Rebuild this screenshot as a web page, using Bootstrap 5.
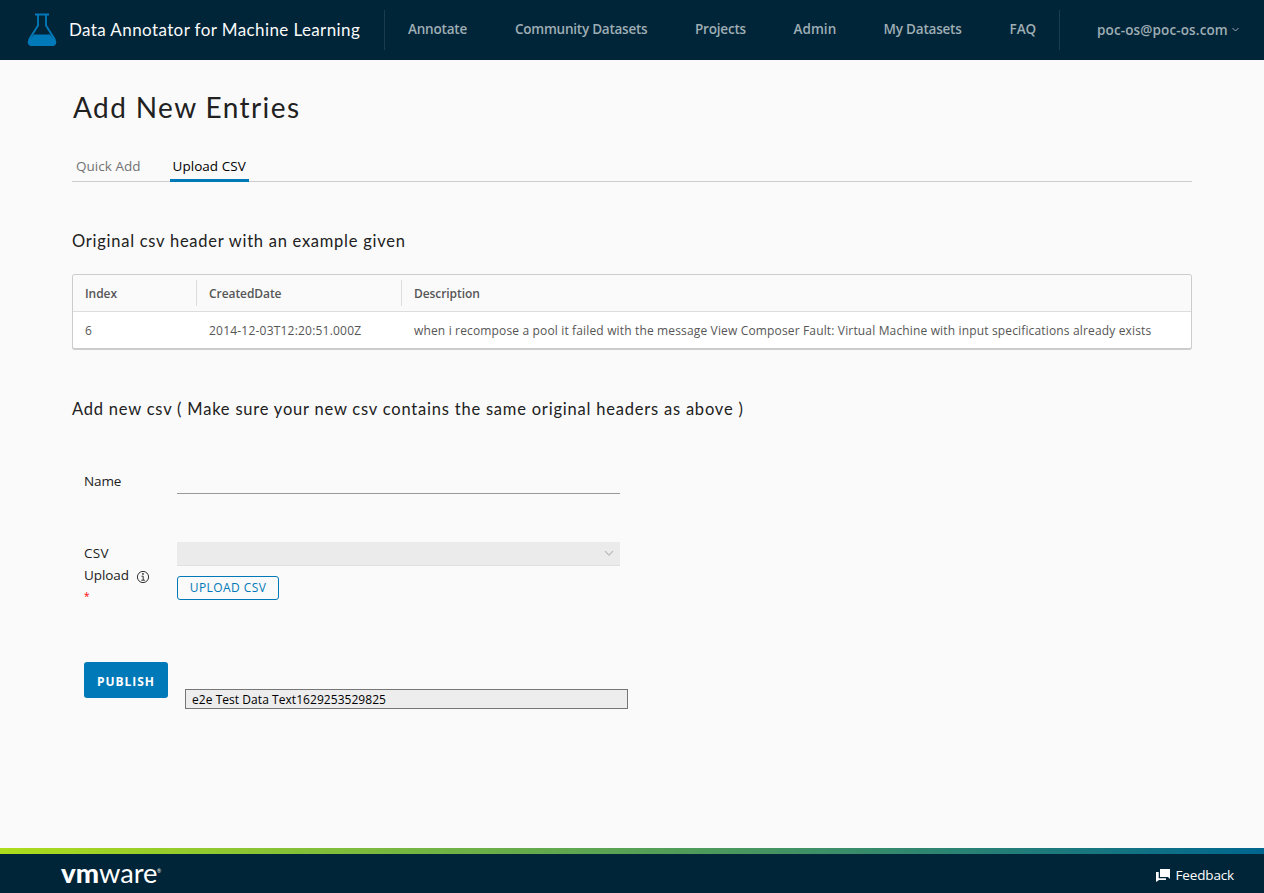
<!DOCTYPE html>
<html lang="en">
<head>
<meta charset="utf-8">
<meta name="viewport" content="width=device-width, initial-scale=1">
<title>Data Annotator for Machine Learning</title>
<link href="https://cdn.jsdelivr.net/npm/bootstrap@5.3.0/dist/css/bootstrap.min.css" rel="stylesheet">
<style>
:root{--navy:#002538;--blue:#0079b8;--ui:"Open Sans","Noto Sans",sans-serif;--head:Lato,"Open Sans",sans-serif}
body{font-family:var(--ui);font-size:13.5px;background:#fafafa;color:#212121;height:893px}
svg{display:block;flex:none;overflow:visible}
.topbar{height:60px;background:var(--navy)}
.brand{width:385px;padding-left:27px}
.brand-title{font:400 17px/24px var(--head);letter-spacing:.4px;color:#fafafa;margin:-1px 0 0 12px}
.flask{margin-top:-1px}
.rule-end{position:relative}
.rule-end::after{content:"";position:absolute;right:0;top:10px;height:40px;width:1px;background:#1a3c4d}
.main-links{width:675px}
.main-links a,.account{font-weight:600;color:#9fadb4;line-height:58px;letter-spacing:-.2px;white-space:nowrap}
.main-links a{padding:0 0 0 23px;width:107px}
.main-links a.w-comm{width:180px;letter-spacing:-.24px}.main-links a.w-proj{width:98.5px}.main-links a.w-adm{width:90px;letter-spacing:.05px}.main-links a.w-my{width:126px}.main-links a.w-faq{width:72px;letter-spacing:0}
.account{padding-left:37px;letter-spacing:.13px}
.page-body{padding:0 72px}
.page-title{font:400 28px/36px var(--head);letter-spacing:1.4px;margin:29px 0 0 1px}
.tab-line{height:36px;margin-top:21px;margin-bottom:47px;padding-left:1px;box-shadow:inset 0 -1px 0 #ccc}
.tab-line a{height:36px;width:71px;line-height:41px;color:#737373;padding:0 3px;letter-spacing:.04px;white-space:nowrap}
.tab-line a.active{color:#000;margin-left:26px;padding-left:2.500px;width:79px;box-shadow:inset 0 -3px 0 var(--blue)}
.section-title{font:400 16.5px/24px var(--head);letter-spacing:.74px;margin:0}
.section-title.second{margin-top:47px;letter-spacing:.79px}
.datagrid{margin-top:21px;height:76px;border:1px solid #ccc;border-bottom-width:2px;border-radius:3px;color:#565656;font-size:12px;background:#fff;overflow:hidden}
.grid-head{height:37px;background:#fafafa;border-bottom:1px solid #ddd;font-weight:600;line-height:37px;letter-spacing:-.07px}
.grid-line{line-height:37px;letter-spacing:.152px;white-space:nowrap}
.c-index{width:124px;padding-left:12px}.c-date{width:205px;padding-left:12px}.c-desc{padding-left:12px}
.grid-line .c-date{letter-spacing:.21px}
.grid-head .c-index,.grid-head .c-date{background:linear-gradient(#ddd,#ddd) right 5px/1px 26px no-repeat}
.entry-form{padding-left:12px}
.form-line{margin-top:48px}
.form-line.first{margin-top:49px}
.label-col{width:93px;letter-spacing:-.1px}
.label-col label{line-height:23px}
.req{color:#f00;font-size:10px;line-height:19px}
.field-col{width:443px}
.name-input{height:24px;border:0;border-bottom:1px solid #999;border-radius:0;background:transparent;padding:0 6px}
.file-select{height:24px;background:#ebebeb;border-bottom:1px solid #e0e0e0;padding-right:6px}
.btn-upload{height:24px;width:102px;margin-top:10px;border:1px solid var(--blue);border-radius:3px;color:var(--blue);font-size:12px;line-height:20px;padding:0;letter-spacing:.42px}
.btn-publish{height:36px;width:84px;border-radius:3px;background:var(--blue);color:#fff;font-size:12px;font-weight:700;padding:4px 0 0;letter-spacing:.95px;border:0}
.title-box{height:20px;width:443px;border:1px solid #767676;border-radius:0;background:#ededed;color:#000;font-size:12px;line-height:18px;padding:0 6px;letter-spacing:.05px;margin:27px 0 0 17px}
.foot{height:45px;background:var(--navy)}
.foot-stripe{height:6px;background:linear-gradient(90deg,#addc1c,#00668f)}
.foot-bar{height:39px;padding:2px 30px 0 60px}
.feedback{color:#fff;font-size:13.5px;letter-spacing:-.15px;line-height:20px}
</style>
</head>
<body class="d-flex flex-column overflow-hidden">
<header class="topbar d-flex">
  <div class="brand rule-end d-flex align-items-center">
    <svg class="flask" width="30" height="34" viewBox="0 0 30 34"><path d="M8 1.500h14M11 2v10.500L2.500 26q-2.500 6 2.500 6h20q5 0 2.500-6L19 12.500V2" fill="none" stroke="#0079b8" stroke-width="1.900"/><path d="M7 21.500h16L28.500 28q1.500 5-4 5h-19q-5.500 0-4-5Z" fill="#0079b8"/></svg>
    <span class="brand-title">Data Annotator for Machine Learning</span>
  </div>
  <nav class="main-links rule-end d-flex">
    <a class="text-decoration-none" href="#">Annotate</a>
    <a class="text-decoration-none w-comm" href="#">Community Datasets</a>
    <a class="text-decoration-none w-proj" href="#">Projects</a>
    <a class="text-decoration-none w-adm" href="#">Admin</a>
    <a class="text-decoration-none w-my" href="#">My Datasets</a>
    <a class="text-decoration-none w-faq" href="#">FAQ</a>
  </nav>
  <div class="account d-flex align-items-center">poc-os@poc-os.com
    <svg class="ms-1" width="7" height="6" viewBox="0 0 7 6"><path d="M.5 1 3.500 4 6.500 1" fill="none" stroke="#9fadb4"/></svg>
  </div>
</header>

<main class="page-body flex-grow-1">
  <h1 class="page-title">Add New Entries</h1>
  <nav class="tab-line d-flex">
    <a class="text-decoration-none" href="#">Quick Add</a>
    <a class="text-decoration-none active" href="#">Upload CSV</a>
  </nav>
  <h4 class="section-title">Original csv header with an example given</h4>
  <div class="datagrid">
    <div class="grid-head d-flex"><div class="c-index">Index</div><div class="c-date">CreatedDate</div><div class="c-desc">Description</div></div>
    <div class="grid-line d-flex"><div class="c-index">6</div><div class="c-date">2014-12-03T12:20:51.000Z</div><div class="c-desc">when i recompose a pool it failed with the message View Composer Fault: Virtual Machine with input specifications already exists</div></div>
  </div>
  <h4 class="section-title second">Add new csv ( Make sure your new csv contains the same original headers as above )</h4>

  <form class="entry-form">
    <div class="form-line first d-flex">
      <div class="label-col"><label for="nm">Name</label></div>
      <div class="field-col"><input id="nm" class="name-input w-100 d-block" type="text"></div>
    </div>
    <div class="form-line d-flex">
      <div class="label-col">
        <div style="height:22px;line-height:23px;letter-spacing:.3px">CSV</div>
        <div class="d-flex align-items-center" style="height:23px">Upload
          <svg style="margin:2px 0 0 7px" width="14" height="14" viewBox="0 0 14 14" fill="none" stroke="#333"><circle cx="7" cy="7" r="5.600"/><path d="M5.500 6.200h1.700v3.900M5.300 10.200h3.600"/><circle cx="7" cy="3.900" r=".5" fill="#333"/></svg>
        </div>
        <div class="req">*</div>
      </div>
      <div class="field-col">
        <div class="file-select d-flex justify-content-end align-items-center">
          <svg width="10" height="7" viewBox="0 0 10 7"><path d="M1 1.200 5 5.200 9 1.200" fill="none" stroke="#b8b8b8" stroke-width="1.200"/></svg>
        </div>
        <button type="button" class="btn btn-upload d-block">UPLOAD CSV</button>
      </div>
    </div>
    <div class="d-flex" style="margin-top:56px">
      <button type="button" class="btn btn-publish">PUBLISH</button>
      <input class="title-box" type="text" value="e2e Test Data Text1629253529825">
    </div>
  </form>
</main>

<footer class="foot">
  <div class="foot-stripe"></div>
  <div class="foot-bar d-flex justify-content-between align-items-center">
    <svg width="104" height="36" viewBox="0 0 104 36" fill="#fff" font-family="Lato, sans-serif" font-size="27"><text x="1" y="26" font-weight="900" textLength="38" lengthAdjust="spacingAndGlyphs">vm</text><text x="39" y="26" textLength="58.500" lengthAdjust="spacingAndGlyphs">ware</text><text x="97" y="16" font-size="5">®</text></svg>
    <div class="feedback d-flex align-items-center">
      <svg style="margin:2px 5px 0 0" width="14" height="13" viewBox="0 0 14 13" fill="#fff"><path d="M4 0h10v10l-2-2H4Z"/><path d="M0 3h2.700v6.300H10V11H3L0 13Z"/></svg>Feedback
    </div>
  </div>
</footer>
<script src="https://cdn.jsdelivr.net/npm/bootstrap@5.3.0/dist/js/bootstrap.bundle.min.js"></script>
</body>
</html>
